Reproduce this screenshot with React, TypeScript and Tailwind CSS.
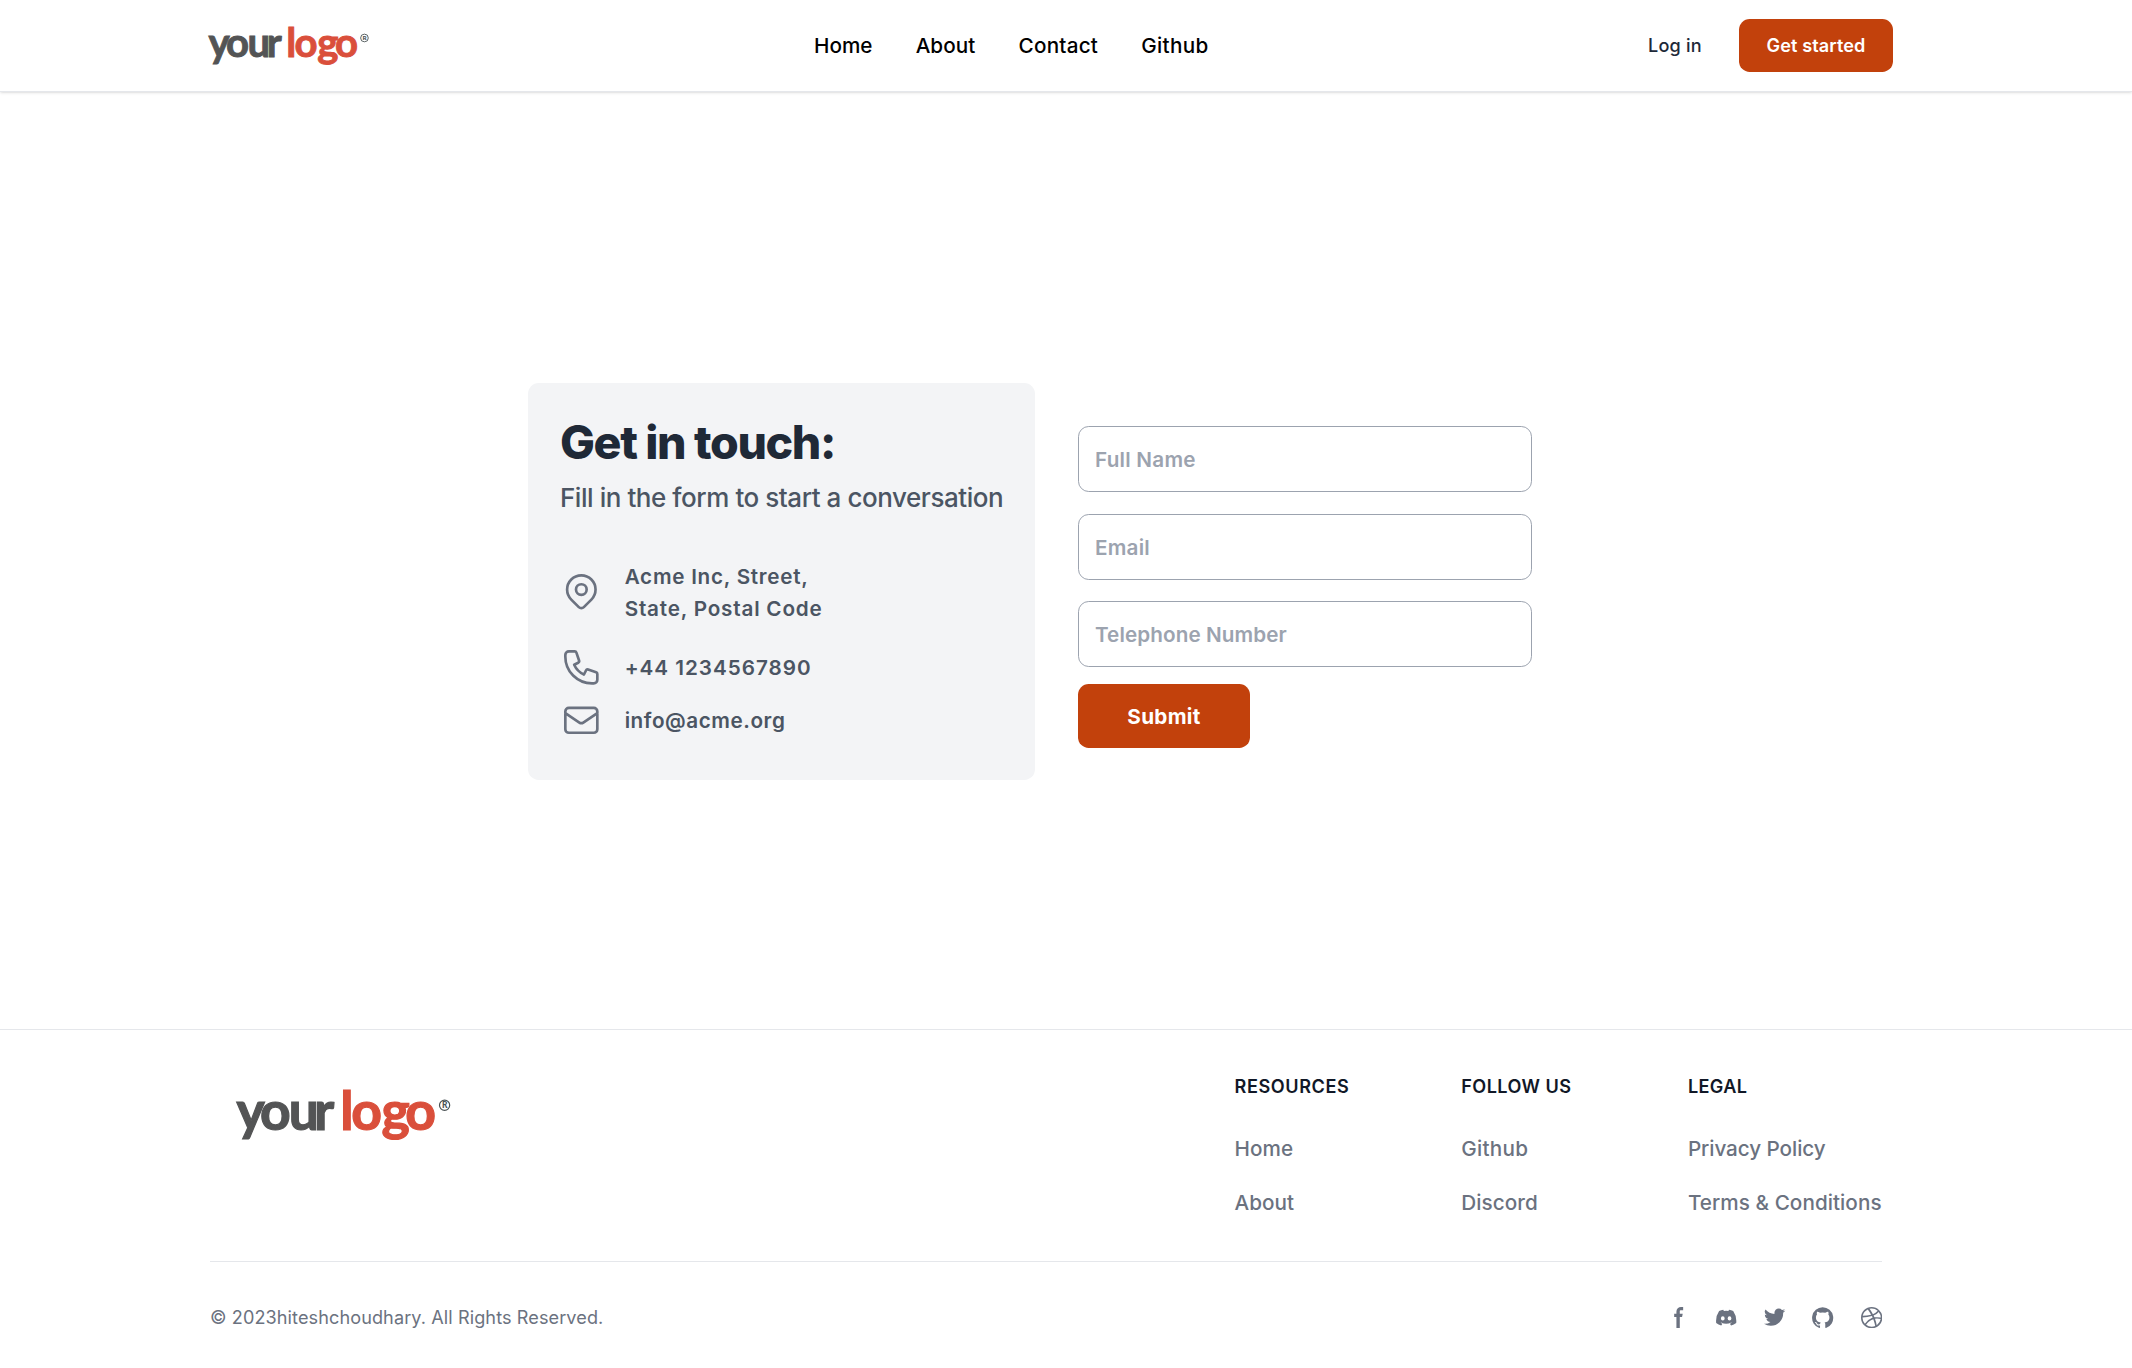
import React from 'react';

function Logo({ className }: { className: string }) {
  return (
    <svg viewBox="0 0 216 56" className={className} aria-label="your logo">
      <text
        x="0.6 24 52.8 78.2"
        y="42"
        fontFamily="Lato, sans-serif"
        fontWeight="700"
        fontSize="53.5"
        fill="#535455"
        stroke="#535455"
        strokeWidth="1.2"
      >
        your
      </text>
      <text
        x="104.2 115.2 145.6 169.2"
        y="42"
        fontFamily="Lato, sans-serif"
        fontWeight="700"
        fontSize="53.5"
        fill="#da4f3b"
        stroke="#da4f3b"
        strokeWidth="1.2"
      >
        logo
      </text>
      <circle cx="208.6" cy="17.3" r="5.1" fill="none" stroke="#4b5355" strokeWidth="1.2" />
      <text
        x="208.8"
        y="20.3"
        textAnchor="middle"
        fontFamily="Lato, sans-serif"
        fontWeight="900"
        fontSize="8.5"
        fill="#4b5355"
      >
        R
      </text>
    </svg>
  );
}

const navLinks = [
  { label: 'Home', className: 'tracking-[0.01px]' },
  { label: 'About', className: 'tracking-[0.05px]' },
  { label: 'Contact', className: 'tracking-[0.23px]' },
  { label: 'Github', className: 'tracking-[0.3px]' },
];

function Header() {
  return (
    <header className="flex h-[92px] items-center border-b border-gray-200 bg-white pl-[208px] shadow-sm">
      <div className="w-[606px]">
        <Logo className="relative top-[0.2px] block h-[42px] w-[162px] overflow-visible" />
      </div>
      <nav className="flex w-[834px] gap-[43.2px] text-[20.7px] leading-8 font-medium text-black">
        {navLinks.map((l) => (
          <a key={l.label} href="#" className={l.className}>
            {l.label}
          </a>
        ))}
      </nav>
      <a href="#" className="-mt-px w-[91px] text-[18.1px] leading-[27px] font-medium tracking-[0.19px] text-gray-800">
        Log in
      </a>
      <a
        href="#"
        className="flex h-[53px] w-[154px] items-center justify-center rounded-[10.7px] bg-[#c2410c] text-[18.1px] font-semibold tracking-[0.12px] text-white"
      >
        Get started
      </a>
    </header>
  );
}

function OutlineIcon({ paths, className = '' }: { paths: string[]; className?: string }) {
  return (
    <svg
      viewBox="0 0 24 24"
      fill="none"
      stroke="currentColor"
      strokeWidth="1.5"
      strokeLinecap="round"
      strokeLinejoin="round"
      className={`size-[42.67px] shrink-0 text-[#6b7280] ${className}`}
    >
      {paths.map((d) => (
        <path key={d} d={d} />
      ))}
    </svg>
  );
}

function ContactCard() {
  return (
    <section className="h-[397px] w-[507px] rounded-[10.7px] bg-[#f3f4f6] p-8 text-[#4b5563]">
      <h1 className="h-14 text-[46.5px] leading-[55px] font-extrabold tracking-[-1.38px] whitespace-nowrap text-[#1f2937]">
        Get in touch:
      </h1>
      <p className="mt-2 text-[26px] leading-[37px] font-medium tracking-[-0.45px] whitespace-nowrap">
        Fill in the form to start a conversation
      </p>
      <div className="mt-[44.5px] flex items-center gap-[22px] text-[20.7px] leading-8 font-semibold">
        <OutlineIcon
          className="-mt-[2px]"
          paths={[
            'M17.657 16.657L13.414 20.9a1.998 1.998 0 01-2.827 0l-4.244-4.243a8 8 0 1111.314 0z',
            'M15 11a3 3 0 11-6 0 3 3 0 016 0z',
          ]}
        />
        <div>
          <div className="tracking-[0.73px]">Acme Inc, Street,</div>
          <div className="tracking-[0.8px]">State, Postal Code</div>
        </div>
      </div>
      <div className="mt-[21px] flex items-center gap-[22px] text-[20.7px] leading-8 font-semibold">
        <OutlineIcon
          paths={[
            'M3 5a2 2 0 012-2h3.28a1 1 0 01.948.684l1.498 4.493a1 1 0 01-.502 1.21l-2.257 1.13a11.042 11.042 0 005.516 5.516l1.13-2.257a1 1 0 011.21-.502l4.493 1.498a1 1 0 01.684.949V19a2 2 0 01-2 2h-1C9.716 21 3 14.284 3 6V5z',
          ]}
        />
        <div className="pt-[1.4px] tracking-[0.98px]">+44 1234567890</div>
      </div>
      <div className="mt-[10.5px] flex items-center gap-[22px] text-[20.7px] leading-8 font-semibold">
        <OutlineIcon
          paths={[
            'M3 8l7.89 5.26a2 2 0 002.22 0L21 8M5 19h14a2 2 0 002-2V7a2 2 0 00-2-2H5a2 2 0 00-2 2v10a2 2 0 002 2z',
          ]}
        />
        <div className="pt-[1.4px] tracking-[0.55px]">info@acme.org</div>
      </div>
    </section>
  );
}

const fields = [
  { label: 'Full Name', type: 'text', className: 'tracking-[0.24px]' },
  { label: 'Email', type: 'email', className: 'pt-[1px] tracking-[0.21px]' },
  { label: 'Telephone Number', type: 'tel', className: 'tracking-[0.08px]' },
];

function ContactForm() {
  return (
    <form className="flex w-[454px] flex-col pt-[43.3px]">
      <div className="flex flex-col gap-[21.6px]">
        {fields.map((f) => (
          <input
            key={f.label}
            type={f.type}
            placeholder={f.label}
            className={`h-[65.9px] w-full rounded-[10.7px] border border-[#9ca3af] bg-white pl-[16px] text-[20.7px] font-semibold text-gray-800 placeholder:text-[#9ca3af] ${f.className}`}
          />
        ))}
      </div>
      <button
        type="button"
        className="mt-[17px] h-16 w-[172px] rounded-[10.7px] bg-[#c2410c] text-[20.7px] font-bold tracking-[0.29px] text-white"
      >
        Submit
      </button>
    </form>
  );
}

const columns = [
  {
    title: 'Resources',
    className: 'tracking-[0.58px]',
    links: [
      { label: 'Home', className: 'tracking-[0.1px]' },
      { label: 'About', className: 'tracking-[0.05px]' },
    ],
  },
  {
    title: 'Follow us',
    className: 'tracking-[0.45px]',
    links: [
      { label: 'Github', className: 'tracking-[0.28px]' },
      { label: 'Discord', className: 'tracking-[0.08px]' },
    ],
  },
  {
    title: 'Legal',
    className: 'tracking-[0.35px]',
    links: [
      { label: 'Privacy Policy', className: 'tracking-[-0.07px]' },
      { label: 'Terms & Conditions', className: 'tracking-[0.05px]' },
    ],
  },
];

const socials = [
  {
    name: 'Facebook',
    viewBox: '0 0 8 19',
    d: 'M6.135 3H8V0H6.135a4.147 4.147 0 0 0-4.142 4.142V6H0v3h2v9.938h3V9h2.021l.592-3H5V3.591A.6.6 0 0 1 5.592 3h.543Z',
  },
  {
    name: 'Discord',
    viewBox: '0 0 21 16',
    d: 'M16.942 1.556a16.3 16.3 0 0 0-4.126-1.3 12.04 12.04 0 0 0-.529 1.1 15.175 15.175 0 0 0-4.573 0 11.585 11.585 0 0 0-.535-1.1 16.274 16.274 0 0 0-4.129 1.3A17.392 17.392 0 0 0 .182 13.218a15.785 15.785 0 0 0 4.963 2.521c.41-.564.773-1.16 1.084-1.785a10.63 10.63 0 0 1-1.706-.83c.143-.106.283-.217.418-.33a11.664 11.664 0 0 0 10.118 0c.137.113.277.224.418.33-.544.328-1.116.606-1.71.832a12.52 12.52 0 0 0 1.084 1.785 16.46 16.46 0 0 0 5.064-2.595 17.286 17.286 0 0 0-2.973-11.59ZM6.678 10.813a1.941 1.941 0 0 1-1.8-2.045 1.93 1.93 0 0 1 1.8-2.047 1.919 1.919 0 0 1 1.8 2.047 1.93 1.93 0 0 1-1.8 2.045Zm6.644 0a1.94 1.94 0 0 1-1.8-2.045 1.93 1.93 0 0 1 1.8-2.047 1.918 1.918 0 0 1 1.8 2.047 1.93 1.93 0 0 1-1.8 2.045Z',
  },
  {
    name: 'Twitter',
    viewBox: '0 0 20 17',
    d: 'M20 1.892a8.178 8.178 0 0 1-2.355.635 4.074 4.074 0 0 0 1.8-2.235 8.344 8.344 0 0 1-2.605.98A4.13 4.13 0 0 0 13.85 0a4.068 4.068 0 0 0-4.1 4.038 4 4 0 0 0 .105.919A11.705 11.705 0 0 1 1.4.734a4.006 4.006 0 0 0 1.268 5.392 4.165 4.165 0 0 1-1.859-.5v.05A4.057 4.057 0 0 0 4.1 9.635a4.19 4.19 0 0 1-1.856.07 4.108 4.108 0 0 0 3.831 2.807A8.36 8.36 0 0 1 0 14.184 11.732 11.732 0 0 0 6.291 16 11.502 11.502 0 0 0 17.964 4.5c0-.177 0-.35-.012-.523A8.143 8.143 0 0 0 20 1.892Z',
  },
  {
    name: 'GitHub',
    viewBox: '0 0 20 20',
    d: 'M10 .333A9.911 9.911 0 0 0 6.866 19.65c.5.092.678-.215.678-.477 0-.237-.01-1.017-.014-1.845-2.757.6-3.338-1.169-3.338-1.169a2.627 2.627 0 0 0-1.1-1.451c-.9-.615.07-.6.07-.6a2.084 2.084 0 0 1 1.518 1.021 2.11 2.11 0 0 0 2.884.823c.044-.503.268-.973.63-1.325-2.2-.25-4.516-1.1-4.516-4.9A3.832 3.832 0 0 1 4.7 7.068a3.56 3.56 0 0 1 .095-2.623s.832-.266 2.726 1.016a9.409 9.409 0 0 1 4.962 0c1.89-1.282 2.717-1.016 2.717-1.016.366.83.402 1.768.1 2.623a3.827 3.827 0 0 1 1.02 2.659c0 3.807-2.319 4.644-4.525 4.889a2.366 2.366 0 0 1 .673 1.834c0 1.326-.012 2.394-.012 2.72 0 .263.18.572.681.475A9.911 9.911 0 0 0 10 .333Z',
  },
  {
    name: 'Dribbble',
    viewBox: '0 0 20 20',
    d: 'M10 0a10 10 0 1 0 10 10A10.009 10.009 0 0 0 10 0Zm6.613 4.614a8.523 8.523 0 0 1 1.93 5.32 20.094 20.094 0 0 0-5.949-.274c-.059-.149-.122-.292-.184-.441a23.879 23.879 0 0 0-.566-1.239 11.41 11.41 0 0 0 4.769-3.366ZM8 1.707a8.821 8.821 0 0 1 2-.238 8.5 8.5 0 0 1 5.664 2.152 9.608 9.608 0 0 1-4.476 3.087A45.758 45.758 0 0 0 8 1.707ZM1.642 8.262a8.57 8.57 0 0 1 4.73-5.981A53.998 53.998 0 0 1 9.54 7.222a32.078 32.078 0 0 1-7.9 1.04h.002Zm2.01 7.46a8.51 8.51 0 0 1-2.2-5.707v-.262a31.64 31.64 0 0 0 8.777-1.219c.243.477.477.964.692 1.449-.114.032-.227.067-.336.1a13.569 13.569 0 0 0-6.942 5.636l.009.003ZM10 18.556a8.508 8.508 0 0 1-5.243-1.8 11.717 11.717 0 0 1 6.7-5.332.509.509 0 0 1 .055-.02 35.65 35.65 0 0 1 1.819 6.476 8.476 8.476 0 0 1-3.331.676Zm4.772-1.462A37.232 37.232 0 0 0 13.113 11a12.513 12.513 0 0 1 5.321.364 8.56 8.56 0 0 1-3.66 5.73h-.002Z',
  },
];

function Footer() {
  return (
    <footer className="h-[339px] border-t border-gray-200 bg-white pl-[210px]">
      <div className="w-[1672px]">
        <div className="grid grid-cols-[1024.5px_226.7px_226.7px_auto] pt-[44.4px]">
          <div className="pt-[13.6px] pl-[26px]">
            <Logo className="block h-14 w-[216px] overflow-visible" />
          </div>
          {columns.map((c) => (
            <div key={c.title} className="whitespace-nowrap">
              <h2 className={`text-[18.1px] leading-6 font-semibold text-[#111827] uppercase ${c.className}`}>
                {c.title}
              </h2>
              <ul className="mt-[34.6px] flex flex-col gap-[22px] text-[20.7px] leading-8 font-medium text-[#6b7280]">
                {c.links.map((l) => (
                  <li key={l.label} className={l.className}>
                    {l.label}
                  </li>
                ))}
              </ul>
            </div>
          ))}
        </div>
        <hr className="mt-[42px] border-gray-200" />
        <div className="mt-[41.4px] flex h-7 items-center justify-between">
          <span className="text-[18.1px] leading-7 tracking-[0.09px] text-[#6b7280]">
            © 2023hiteshchoudhary. All Rights Reserved.
          </span>
          <div className="flex gap-[26.9px] text-[#6b7280]">
            {socials.map((s) => (
              <svg key={s.name} viewBox={s.viewBox} fill="currentColor" aria-label={s.name} className="size-[21.33px]">
                <path fillRule="evenodd" clipRule="evenodd" d={s.d} />
              </svg>
            ))}
          </div>
        </div>
      </div>
    </footer>
  );
}

export default function App() {
  return (
    <div className="h-[1368px] w-[2132px] overflow-hidden bg-white font-['Inter',sans-serif]">
      <Header />
      <main className="flex h-[937px] gap-[43px] pt-[291px] pl-[528px]">
        <ContactCard />
        <ContactForm />
      </main>
      <Footer />
    </div>
  );
}
